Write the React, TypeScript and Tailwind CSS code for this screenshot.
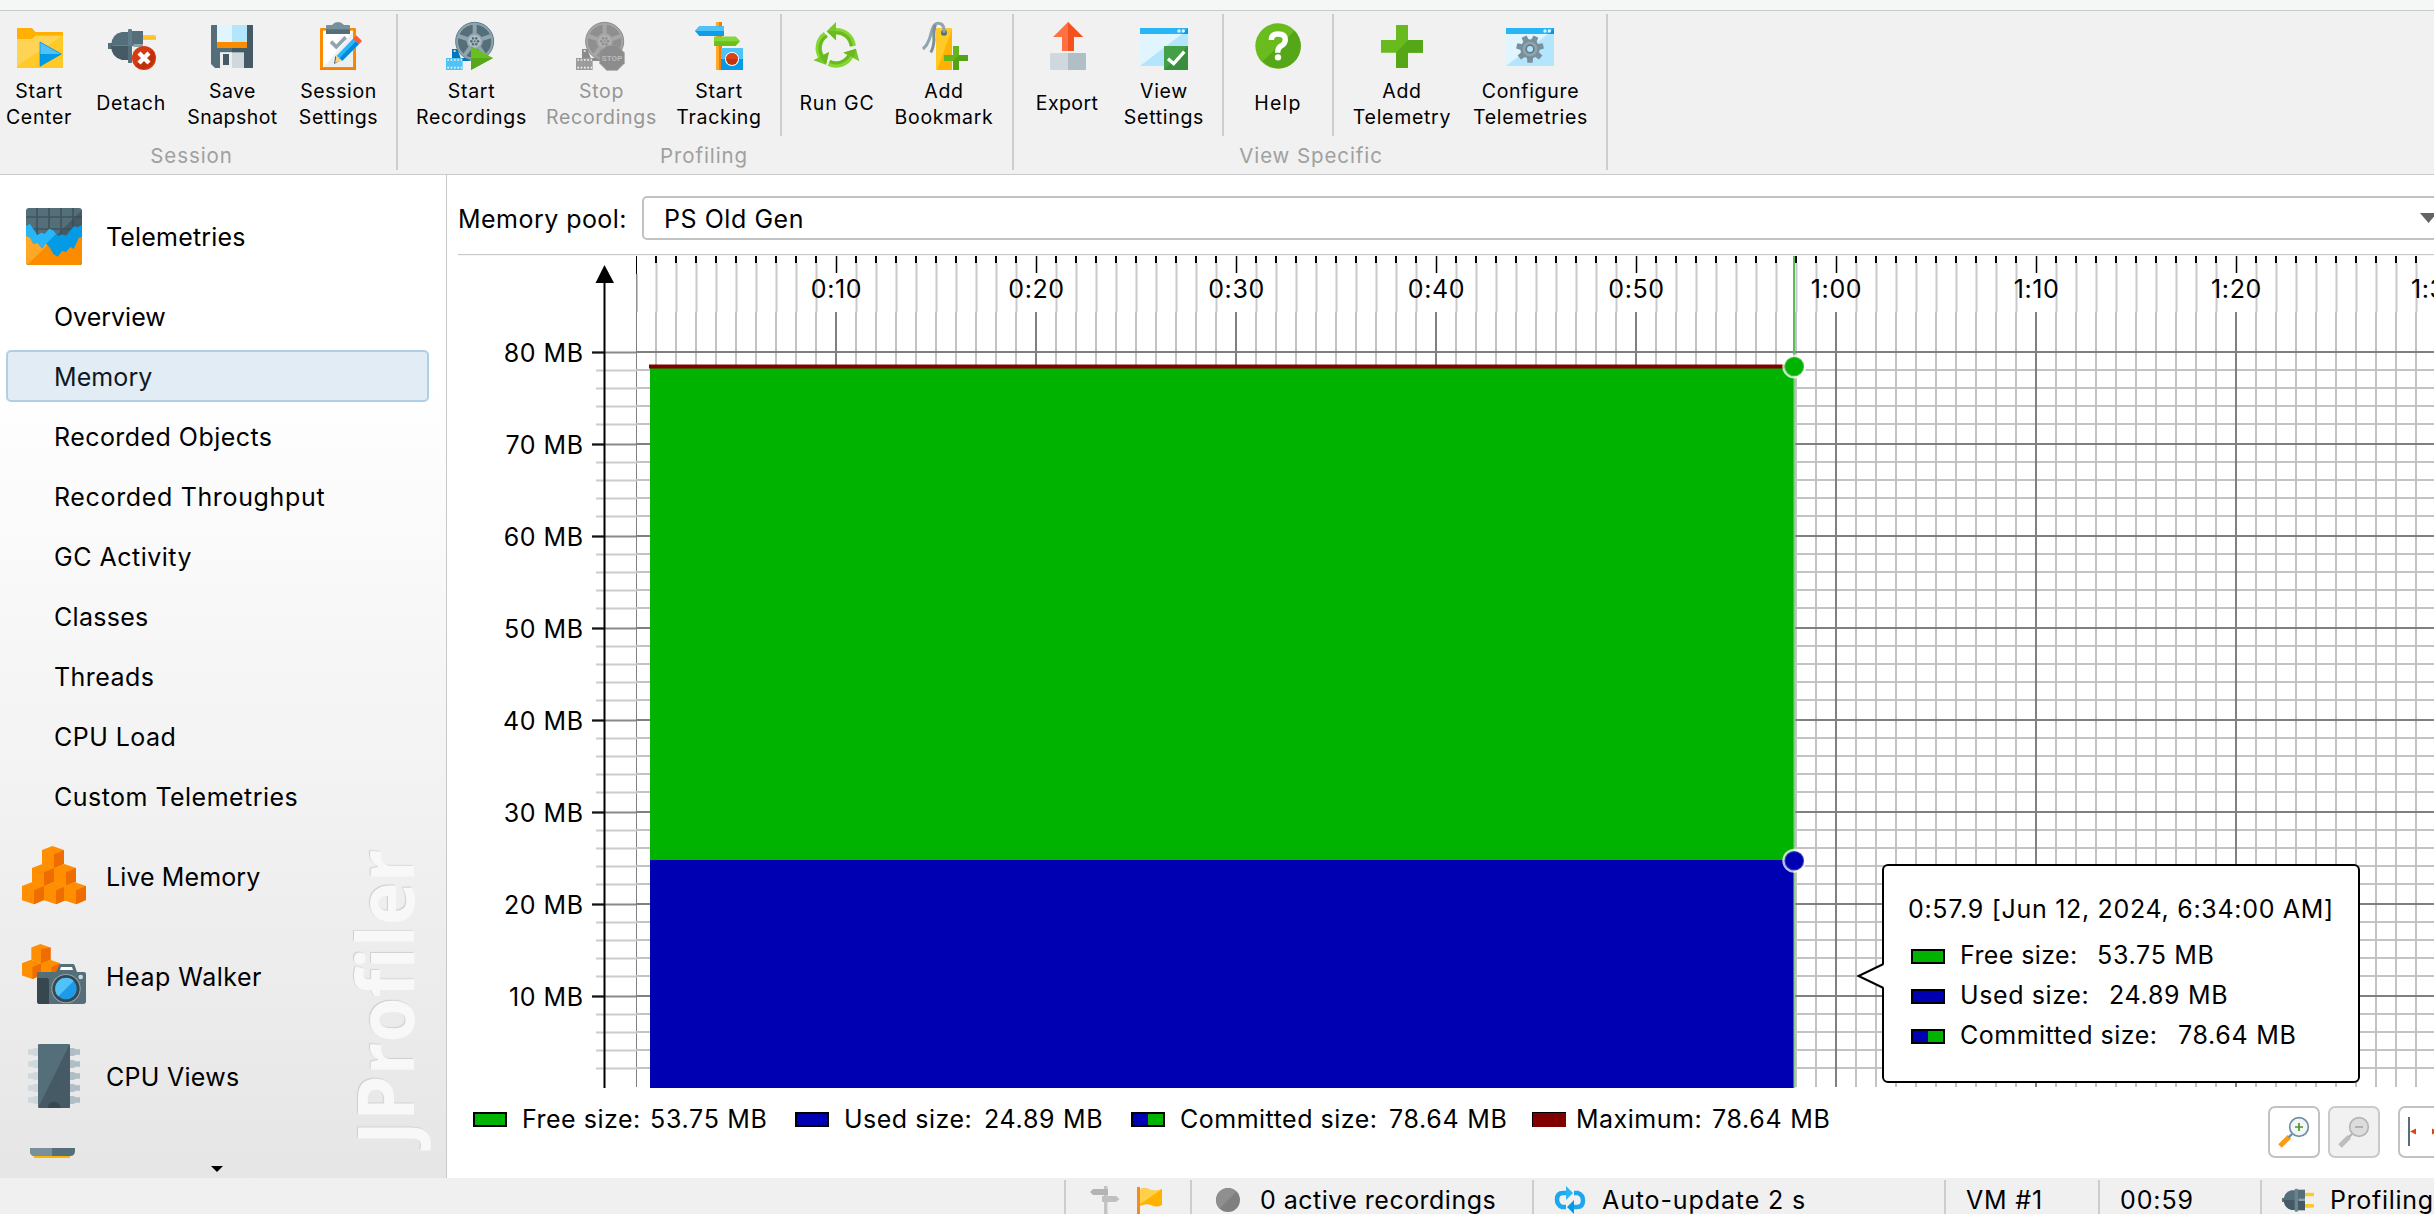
import React from 'react';

type IconProps = { vb: string; className?: string; children: React.ReactNode };
const Svg = ({ vb, className = 'size-12', children }: IconProps) => (
  <svg viewBox={vb} className={className + ' block shrink-0 overflow-visible'}>{children}</svg>
);

/* ---------- toolbar icons ---------- */
const StartCenterIcon = () => (
  <Svg vb="48 66 144 144">
    <path d="M51 84H96L106 96H189V204H51Z" fill="#ffb000" />
    <path d="M51 117H96L106 107H189V204H51Z" fill="#ffca28" />
    <path d="M51 117H96L106 107H186L51 198Z" fill="#ffd454" />
    <path d="M120 126L184 162L120 199Z" fill="#039be5" />
    <path d="M120 126L184 162H120Z" fill="#4fc3f7" />
    <path d="M120 126L184 162L120 199Z" fill="none" stroke="#0288d1" strokeWidth="2" />
  </Svg>
);
const DetachIcon = () => (
  <Svg vb="324 66 144 144">
    <rect x="324" y="129" width="14" height="18" fill="#546e7a" />
    <rect x="424" y="105" width="44" height="14" rx="5" fill="#ffca28" />
    <rect x="424" y="112" width="44" height="7" fill="#fbc02d" />
    <path d="M384 96H366Q334 102 333 137H384Z" fill="#546e7a" />
    <path d="M384 180H366Q334 172 333 137H384Z" fill="#455a64" />
    <rect x="396" y="93" width="33" height="45" fill="#546e7a" />
    <rect x="400" y="132" width="29" height="9" fill="#90a4ae" />
    <rect x="384" y="87" width="12" height="102" rx="4" fill="#607d8b" />
    <rect x="384" y="138" width="12" height="51" rx="4" fill="#546e7a" />
    <circle cx="432" cy="174" r="36" fill="#d33b13" />
    <path d="M406 199A36 36 0 0 0 457 149Z" fill="#bf300b" />
    <path d="M417 159L447 189M447 159L417 189" stroke="#fff" strokeWidth="13" />
  </Svg>
);
const SaveIcon = () => (
  <Svg vb="624 66 144 144">
    <path d="M636 75H756Q759 75 759 78V201Q759 204 756 204H645L633 192V78Q633 75 636 75Z" fill="#546e7a" />
    <path d="M696 75H756Q759 75 759 78V201Q759 204 756 204H696Z" fill="#455a64" />
    <rect x="651" y="75" width="90" height="51" fill="#b3e5fc" />
    <rect x="651" y="75" width="45" height="51" fill="#e1f5fe" />
    <rect x="651" y="126" width="90" height="18" fill="#fb8c00" />
    <rect x="660" y="157" width="72" height="47" fill="#cfd8dc" />
    <rect x="660" y="157" width="36" height="47" fill="#eceff1" />
    <rect x="669" y="162" width="18" height="33" fill="#455a64" />
  </Svg>
);
const SessionSettingsIcon = () => (
  <Svg vb="942 66 144 144">
    <rect x="960" y="84" width="108" height="126" rx="3" fill="#fb8c00" />
    <path d="M1068 150V210H960V205H1063Z" fill="#f57c00" />
    <rect x="969" y="92" width="90" height="109" fill="#fff" />
    <path d="M1059 96V201H972Z" fill="#eceff1" />
    <path d="M978 78Q978 75 981 75H996Q1003 66 1014 66Q1025 66 1032 75H1047Q1050 75 1050 78V102H978Z" fill="#78909c" />
    <rect x="978" y="88" width="72" height="14" fill="#546e7a" />
    <path d="M993 125L1009 141L1037 112" stroke="#90a4ae" strokeWidth="11" fill="none" />
    <path d="M1002 192L1006 168L1020 182Z" fill="#455a64" />
    <path d="M1005 188L1010 166L1028 181Z" fill="#ffcc80" />
    <path d="M1010 167L1059 116L1077 132L1027 182Z" fill="#29b6f6" />
    <path d="M1019 174L1068 124L1077 132L1027 182Z" fill="#0288e0" />
    <path d="M1059 116L1069 106L1086 123L1077 133Z" fill="#ff5a36" />
  </Svg>
);
const Film = ({ c1, c2 }: { c1: string; c2: string }) => (
  <>
    <path d="M156 147H172L182 174H211V183H156Z" fill={c2} />
    <rect x="138" y="174" width="50" height="36" fill={c1} />
    <path d="M142 180H186M142 203H186" stroke="#f1f1f1" strokeWidth="5" strokeDasharray="5 5" />
    <path d="M161 153h6" stroke="#f1f1f1" strokeWidth="5" />
  </>
);
const Reel = ({ rim, body, dark, lite }: { rim: string; body: string; dark: string; lite: string }) => (
  <>
    <circle cx="224" cy="124" r="57" fill={body} stroke={rim} strokeWidth="3" />
    <circle cx="224" cy="124" r="37" fill="none" stroke={dark} strokeWidth="26" />
    {[0, 72, 144, 216, 288].map(a => (
      <path key={a} d="M224 124V72" stroke={body} strokeWidth="12" transform={`rotate(${a} 224 124)`} />
    ))}
    <circle cx="224" cy="124" r="24" fill={body} />
    <circle cx="224" cy="124" r="19" fill={lite} />
    {[0, 60, 120, 180, 240, 300].map(a => (
      <circle key={a} cx="224" cy="114" r="4" fill={dark} transform={`rotate(${a + 30} 224 124)`} />
    ))}
    <circle cx="224" cy="124" r="3" fill={dark} />
  </>
);
const StartRecIcon = () => (
  <Svg vb="138 66 144 144">
    <Film c1="#4fc3f7" c2="#0277bd" />
    <Reel rim="#607d8b" body="#90a4ae" dark="#546e7a" lite="#b0bec5" />
    <path d="M213 138L279 174L213 210Z" fill="#6abf1e" />
    <path d="M213 174H279L213 210Z" fill="#56a818" />
  </Svg>
);
const StopRecIcon = () => (
  <Svg vb="138 66 144 144">
    <Film c1="#9c9c9c" c2="#8a8a8a" />
    <Reel rim="#8d8d8d" body="#a6a6a6" dark="#8f8f8f" lite="#b0b0b0" />
    <path d="M230 137H262L283 158V190L262 211H230L209 190V158Z" fill="#8c8c8c" stroke="#9f9f9f" strokeWidth="2" />
    <text x="246" y="183" textAnchor="middle" fontFamily="Roboto" fontWeight="700" fontSize="24" fill="#b9b9b9" textLength="62">STOP</text>
  </Svg>
);
const TrackingIcon = () => (
  <Svg vb="882 66 144 144">
    <rect x="945" y="66" width="18" height="144" fill="#ffa726" />
    <rect x="954" y="66" width="9" height="144" fill="#f57c00" />
    <path d="M882 93L895 79H969V108H895Z" fill="#0f9ce8" />
    <path d="M882 93L895 79H969V93Z" fill="#4fc3f7" />
    <path d="M1017 124L1004 110H939V138H1004Z" fill="#6abf1e" />
    <path d="M1017 124L1004 110H939V124Z" fill="#86d636" />
    <rect x="960" y="144" width="66" height="66" fill="#039be5" />
    <rect x="960" y="144" width="66" height="33" fill="#4fc3f7" />
    <circle cx="993" cy="177" r="21" fill="#fff" />
    <circle cx="993" cy="177" r="18" fill="#bf360c" />
    <path d="M975 177A18 18 0 0 1 1011 177Z" fill="#dd4414" />
  </Svg>
);
const RunGcIcon = () => (
  <Svg vb="96 66 144 144">
    <g fill="none" strokeWidth="19" stroke="#86d636">
      <path d="M165 94A49 49 0 0 1 218 138" />
      <path d="M137 104A49 49 0 0 0 125 172" />
      <path d="M147 189A49 49 0 0 0 211 168" />
    </g>
    <g fill="none" strokeWidth="9" stroke="#69b91f">
      <path d="M160 99A44 44 0 0 1 214 139" />
      <path d="M141 107A44 44 0 0 0 129 172" />
      <path d="M149 184A44 44 0 0 0 208 164" />
    </g>
    <path d="M140 94L168 66V121Z" fill="#76c928" />
    <path d="M140 94L168 94V121Z" fill="#69b91f" />
    <path d="M100 181L147 156L138 194Z" fill="#76c928" />
    <path d="M120 170L147 156L138 194Z" fill="#69b91f" />
    <path d="M190 158L228 146L238 184Z" fill="#76c928" />
    <path d="M190 158L228 146L222 172Z" fill="#69b91f" />
  </Svg>
);
const BookmarkIcon = () => (
  <Svg vb="420 66 144 144">
    <rect x="468" y="84" width="48" height="126" rx="3" fill="#ffca28" />
    <path d="M516 88V210H471Z" fill="#ffb300" />
    <circle cx="492" cy="98" r="9" fill="#546e7a" />
    <path d="M492 98V88Q490 70 474 70Q462 70 456 90L448 118Q442 136 429 147" fill="none" stroke="#90a4ae" strokeWidth="9" />
    <path d="M466 74Q460 92 462 120Q460 146 452 157" fill="none" stroke="#78909c" strokeWidth="9" />
    <path d="M519 138H537V165H564V183H537V210H519V183H492V165H519Z" fill="#64b51d" />
    <path d="M537 165H564V183H537V210H519V183Z" fill="#53a316" />
  </Svg>
);
const ExportIcon = () => (
  <Svg vb="792 66 144 144">
    <path d="M864 66L909 111H882V153H846V111H819Z" fill="#ff7043" />
    <path d="M864 66L909 111H882V153H864Z" fill="#f4511e" />
    <rect x="810" y="159" width="108" height="51" rx="3" fill="#cfd8dc" />
    <path d="M864 159H915Q918 159 918 162V207Q918 210 915 210H864Z" fill="#b0bec5" />
  </Svg>
);
const Win = () => (
  <>
    <rect x="1080" y="84" width="144" height="114" fill="#b3e5fc" />
    <path d="M1080 102H1206L1080 198Z" fill="#e1f5fe" />
    <rect x="1080" y="84" width="144" height="18" fill="#29b6f6" />
    <path d="M1206 102L1224 84V102Z" fill="#039be5" />
    <circle cx="1197" cy="93" r="5" fill="#e1f5fe" />
    <circle cx="1210" cy="93" r="5" fill="#e1f5fe" />
  </>
);
const ViewSettingsIcon = () => (
  <Svg vb="1080 66 144 144">
    <Win />
    <rect x="1152" y="138" width="72" height="72" fill="#388e3c" />
    <path d="M1152 138H1224L1152 210Z" fill="#43a047" />
    <path d="M1164 176L1181 191L1213 155" fill="none" stroke="#fff" strokeWidth="10" />
  </Svg>
);
const HelpIcon = () => (
  <Svg vb="162 66 144 144">
    <circle cx="234" cy="138" r="68" fill="#6abb1d" />
    <path d="M188 184A66 66 0 0 0 284 92Z" fill="#56a717" />
    <path d="M214 120Q214 102 234 102Q256 102 256 119Q256 131 243 138Q233 143 233 158" fill="none" stroke="#fff" strokeWidth="16" />
    <circle cx="234" cy="172" r="9.500" fill="#fff" />
  </Svg>
);
const AddIcon = () => (
  <Svg vb="534 66 144 144">
    <path d="M588 75H624V120H669V158H624V204H588V158H543V120H588Z" fill="#69ba1d" />
    <path d="M624 120H669V158H624V204H588V158Z" fill="#56a717" />
  </Svg>
);
const ConfigureIcon = () => (
  <Svg vb="1080 66 144 144">
    <Win />
    <g transform="translate(162 0)">
      {[0, 1, 2, 3, 4, 5, 6].map(k => (
        <path key={k} d="M980 160L982 188H998L1000 160Z" transform={`rotate(${(k * 360) / 7} 990 147)`} fill="#78909c" />
      ))}
      <circle cx="990" cy="147" r="29" fill="#78909c" />
      <circle cx="990" cy="147" r="22" fill="#90a4ae" />
      <circle cx="990" cy="147" r="14" fill="#607d8b" />
      <circle cx="990" cy="147" r="9" fill="#b3e5fc" />
    </g>
  </Svg>
);

/* ---------- toolbar ---------- */
type ToolProps = { w: string; lines: string[]; ls?: string; pad?: string; disabled?: boolean; children: React.ReactNode };
const Tool = ({ w, lines, ls = 'tracking-[0.7px]', pad = '', disabled, children }: ToolProps) => (
  <div className={w + ' flex shrink-0 flex-col items-center'}>
    {children}
    <div className={ls + ' ' + pad + ' flex h-[52px] flex-col items-center justify-center text-[19.5px] leading-[26px] whitespace-nowrap ' + (lines.length > 1 ? 'mt-2 ' : 'mt-[7px] ') + (disabled ? 'text-[#969696]' : 'text-black')}>
      {lines.map(l => <div key={l}>{l}</div>)}
    </div>
  </div>
);
const Sep = () => <div className="-mt-2 h-[122px] w-[2px] shrink-0 bg-[#cdcdcd]" />;
const Group = ({ w, label, pad = '', children }: { w: string; label: string; pad?: string; children: React.ReactNode }) => (
  <div className={w + ' flex shrink-0 flex-col'}>
    <div className="flex h-[133px] pt-[11px]">{children}</div>
    <div className={pad + ' text-center text-[20.5px] leading-6 tracking-[0.9px] text-[#a0a0a0]'}>{label}</div>
  </div>
);
const GroupSep = () => <div className="mt-[3px] h-[156px] w-[2px] shrink-0 bg-[#cdcdcd]" />;

const Toolbar = () => (
  <div className="flex h-[164px] shrink-0 border-b border-[#cacaca] bg-[#f1f1f1]">
    <Group w="w-[396px]" label="Session" pad="pr-[13px]">
      <Tool w="w-20" lines={['Start', 'Center']} pad="pr-[2px]"><StartCenterIcon /></Tool>
      <Tool w="w-[104px]" lines={['Detach']} pad="pr-[2px]"><DetachIcon /></Tool>
      <Tool w="w-24" lines={['Save', 'Snapshot']} ls="tracking-[0.45px]" pad="pl-[1px]"><SaveIcon /></Tool>
      <Tool w="w-[116px]" lines={['Session', 'Settings']} ls="tracking-[0.6px]" pad="pl-[1px]"><SessionSettingsIcon /></Tool>
    </Group>
    <GroupSep />
    <Group w="w-[614px]" label="Profiling" pad="pr-[2px]">
      <Tool w="w-36" lines={['Start', 'Recordings']} pad="pl-[3px]"><StartRecIcon /></Tool>
      <Tool w="w-[116px]" lines={['Stop', 'Recordings']} disabled pad="pl-[3px]"><StopRecIcon /></Tool>
      <Tool w="w-[122px]" lines={['Start', 'Tracking']}><TrackingIcon /></Tool>
      <Sep />
      <Tool w="w-[108px]" lines={['Run GC']} ls="tracking-[0.87px]" pad="pl-[2px]"><RunGcIcon /></Tool>
      <Tool w="w-[108px]" lines={['Add', 'Bookmark']}><BookmarkIcon /></Tool>
    </Group>
    <GroupSep />
    <Group w="w-[592px]" label="View Specific" pad="pl-[2px]">
      <Tool w="w-[108px]" lines={['Export']} ls="tracking-[0.4px]" pad="pr-[2px]"><ExportIcon /></Tool>
      <Tool w="w-[84px]" lines={['View', 'Settings']}><ViewSettingsIcon /></Tool>
      <div className="w-4" />
      <Sep />
      <Tool w="w-[108px]" lines={['Help']} ls="tracking-[1.3px]"><HelpIcon /></Tool>
      <Sep />
      <Tool w="w-[136px]" lines={['Add', 'Telemetry']}><AddIcon /></Tool>
      <Tool w="w-[120px]" lines={['Configure', 'Telemetries']} pad="pl-[1px]"><ConfigureIcon /></Tool>
    </Group>
    <GroupSep />
  </div>
);

/* ---------- sidebar icons ---------- */
const TelemetriesIcon = () => (
  <Svg vb="66 72 192 192" className="size-16">
    <clipPath id="tel"><rect x="78" y="84" width="168" height="171" rx="9" /></clipPath>
    <g clipPath="url(#tel)">
      <rect x="78" y="84" width="168" height="171" fill="#546e7a" />
      <path d="M246 90V255H80Z" fill="#455a64" />
      <path d="M111 84V200M147 84V200M183 84V200M219 84V200M78 111H246M78 147H246" stroke="#37474f" strokeOpacity="0.65" strokeWidth="5" />
      <path d="M78 138L90 132L112 166L124 158L134 162L148 146L160 152L174 168L186 163L198 167L222 138L232 142L246 135V255H78Z" fill="#039be5" />
      <path d="M78 138L90 132L112 166L124 158L134 162L148 146L160 152L168 162L100 230H78Z" fill="#29b6f6" />
      <path d="M78 168L90 174L100 193L112 190L126 206L138 191L150 204L160 222L173 230L186 213L198 216L211 201L221 207L236 174L246 171V255H78Z" fill="#fb8c00" />
      <path d="M78 168L90 174L100 193L112 190L126 206L138 191L142 196L82 254H78Z" fill="#ffa726" />
    </g>
  </Svg>
);
const Cube = ({ x, y, s = 1 }: { x: number; y: number; s?: number }) => (
  <g transform={`translate(${x} ${y}) scale(${s})`}>
    <path d="M0 12L31 0L66 12V54L36 67L0 55Z" fill="#ff8f00" />
    <path d="M36 25L66 12V54L36 67Z" fill="#ef6c00" />
  </g>
);
const LiveMemoryIcon = () => (
  <Svg vb="66 192 192 192" className="size-16">
    <Cube x={126} y={198} />
    <Cube x={96} y={252} /><Cube x={162} y={252} />
    <Cube x={66} y={306} /><Cube x={132} y={306} /><Cube x={192} y={306} />
  </Svg>
);
const HeapWalkerIcon = () => (
  <Svg vb="66 492 192 192" className="size-16">
    <Cube x={94} y={492} s={0.87} />
    <Cube x={66} y={539} s={0.87} /><Cube x={123} y={539} s={0.87} />
    <path d="M123 507L151 503V538L123 550Z" fill="#ef6c00" />
    <path d="M111 582Q111 576 117 576H168L178 556Q180 552 184 552H218Q222 552 224 556L231 576H252Q258 576 258 582V664Q258 672 250 672H119Q111 672 111 664Z" fill="#546e7a" />
    <path d="M111 594H140Q147 594 147 602V672H119Q111 672 111 664Z" fill="#37474f" />
    <path d="M183 561H216L219 570H180Z" fill="#fff" />
    <circle cx="198" cy="626" r="44" fill="#90a4ae" />
    <circle cx="198" cy="626" r="41" fill="#37474f" />
    <circle cx="198" cy="626" r="32" fill="#1e9be8" />
    <path d="M175 649A32 32 0 0 1 221 603Z" fill="#4fc3f7" />
    <circle cx="242" cy="591" r="7" fill="#cfd8dc" />
  </Svg>
);
const CpuIcon = () => (
  <Svg vb="66 792 192 192" className="size-16">
    {[816, 852, 888, 924, 960].map(y => (
      <g key={y}>
        <path d={`M84 ${y - 8}H96L104 ${y - 12}H114V${y + 12}H104L96 ${y + 8}H84Z`} fill="#cfd8dc" />
        <path d={`M240 ${y - 8}H228L220 ${y - 12}H210V${y + 12}H220L228 ${y + 8}H240Z`} fill="#b0bec5" />
      </g>
    ))}
    <rect x="114" y="792" width="96" height="192" rx="4" fill="#546e7a" />
    <path d="M208 795L210 797V980Q210 984 206 984H118L116 980Z" fill="#455a64" />
    <path d="M143 984A19 19 0 0 1 181 984Z" fill="#37474f" />
  </Svg>
);

const Category = ({ label, ls, children }: { label: string; ls: string; children: React.ReactNode }) => (
  <div className="flex h-[100px] items-center pl-[22px]">
    {children}
    <span className={ls + ' ml-5 pt-[3px] text-[25px]'}>{label}</span>
  </div>
);
const ITEMS: [string, string][] = [
  ['Overview', 'tracking-[0px]'],
  ['Memory', 'tracking-[0.1px]'],
  ['Recorded Objects', 'tracking-[0.45px]'],
  ['Recorded Throughput', 'tracking-[0.65px]'],
  ['GC Activity', 'tracking-[0.5px]'],
  ['Classes', 'tracking-[0.3px]'],
  ['Threads', 'tracking-[0.45px]'],
  ['CPU Load', 'tracking-[0.45px]'],
  ['Custom Telemetries', 'tracking-[0.47px]'],
];
const Sidebar = () => (
  <div className="relative flex w-[447px] shrink-0 flex-col overflow-hidden border-r border-[#c8c8c8] bg-linear-to-b from-white from-20% to-[#e6e6e6] pt-[11px]">
    <div className="absolute top-[668px] left-[342px] h-[300px] w-[84px]">
      <div className="absolute bottom-[-2px] left-0 origin-bottom-left translate-x-[84px] -rotate-90">
        <div className="origin-left scale-x-[0.93] font-['Open_Sans'] text-[78px] leading-[84px] font-bold text-[#f8f8f8] [font-variant-ligatures:none] [text-shadow:1px_-1px_1px_#cfcfcf]">JProfiler</div>
      </div>
    </div>
    <Category label="Telemetries" ls="tracking-[0.18px]"><TelemetriesIcon /></Category>
    {ITEMS.map(([t, ls], i) => (
      <div key={t} className="flex h-[60px] items-center px-[6px]">
        <div className={ls + ' flex h-[52px] w-[423px] items-center rounded-[5px] border-2 pt-[3px] pl-[46px] text-[25px] ' + (i === 1 ? 'border-[#afcfe7] bg-[#e2ecf5] text-[#0e1822]' : 'border-transparent text-black')}>{t}</div>
      </div>
    ))}
    <Category label="Live Memory" ls="tracking-[0.1px]"><LiveMemoryIcon /></Category>
    <Category label="Heap Walker" ls="tracking-[0.5px]"><HeapWalkerIcon /></Category>
    <Category label="CPU Views" ls="tracking-[0.28px]"><CpuIcon /></Category>
    <svg viewBox="90 1104 135 30" className="mt-[22px] ml-[30px] block h-[10px] w-[45px] shrink-0">
      <path d="M90 1104H225V1112Q225 1128 210 1128H105Q90 1128 90 1112Z" fill="#546e7a" />
      <path d="M90 1104H156V1128H105Q90 1128 90 1112Z" fill="#78909c" />
      <rect x="102" y="1128" width="108" height="6" fill="#ffb300" />
    </svg>
    <svg viewBox="0 0 12 6" className="mt-2 ml-[211px] block h-[6px] w-3 shrink-0"><path d="M0 0H12L6 6Z" /></svg>
  </div>
);

/* ---------- chart ---------- */
const SECONDS = Array.from({ length: 90 }, (_, i) => i);
const ROWS: { y: number; major: boolean }[] = [];
for (let k = 0; k < 8; k++) {
  const y = 352 + k * 92;
  ROWS.push({ y, major: true });
  for (let m = 1; m <= 4; m++) ROWS.push({ y: y + m * 18, major: false });
}
const fmt = (s: number) => `${Math.floor(s / 60)}:${String(s % 60).padStart(2, '0')}`;

const Chart = () => (
  <svg viewBox="447 256 1987 832" width="1987" height="832" className="block shrink-0 font-['Inter'] text-[25px]">
    {/* time axis */}
    {SECONDS.map(i => {
      const x = 636 + i * 20;
      const major = i % 10 === 0;
      if (i === 0) return (
        <g key={i}>
          <rect x="636" y="256" width="1" height="18" fill="#000" />
          <rect x="636" y="274" width="1.500" height="38" fill="#8f8f8f" />
          <rect x="636" y="312" width="1" height="775" fill="#808080" />
        </g>
      );
      return (
        <g key={i}>
          {major
            ? <rect x={x - 0.25} y="256" width="1.500" height="17" fill="#000" />
            : <rect x={x - 1} y="256" width="2" height="7" fill="#000" />}
          {!major && <rect x={x - 0.5} y="263" width="2" height="49" fill="#c9c9c9" />}
          {!major && <rect x={x - 1} y="312" width="2" height="775" fill="#c3c3c3" />}
        </g>
      );
    })}
    {/* memory axis */}
    {ROWS.map(({ y, major }) => (
      <g key={y}>
        <rect x={major ? 592 : 596} y={y - 0.5} width={major ? 45 : 41} height="2" fill={major ? '#8a8a8a' : '#cccccc'} />
        {major && <rect x="592" y={y - 0.5} width="12" height="2" fill="#111" />}
        <rect x="636" y={y - 1} width="1798" height="2" fill={major ? '#808080' : '#c3c3c3'} />
      </g>
    ))}
    {SECONDS.filter(i => i && i % 10 === 0).map(i => (
      <rect key={i} x={635 + i * 20} y="312" width="2" height="775" fill="#808080" />
    ))}
    <rect x="603.500" y="275" width="2" height="813" fill="#000" />
    <path d="M604.500 265L614 283H595.500Z" />
    {[80, 70, 60, 50, 40, 30, 20, 10].map((v, k) => (
      <text key={v} x="583.500" y={361.500 + k * 92} textAnchor="end" letterSpacing="0.5">{v} MB</text>
    ))}
    {[10, 20, 30, 40, 50, 60, 70, 80, 90].map(s => (
      <text key={s} x={636.500 + s * 20} y="298" textAnchor="middle" letterSpacing="0.6">{fmt(s)}</text>
    ))}
    {/* stacked areas */}
    <rect x="650" y="368" width="1144" height="492" fill="#00b300" />
    <rect x="650" y="860" width="1144" height="228" fill="#0000b3" />
    <rect x="649" y="364.500" width="1145" height="4" fill="#800000" />
    {/* cursor */}
    <rect x="1793" y="256" width="2" height="104" fill="#5cbd5c" />
    <rect x="1793.500" y="368" width="1.800" height="720" fill="#8ccb8c" />
    <circle cx="1794.300" cy="366.500" r="12" fill="#fff" fillOpacity="0.75" />
    <circle cx="1794.300" cy="366.500" r="9.800" fill="#00b300" fillOpacity="0.75" />
    <circle cx="1794.300" cy="366.500" r="8.800" fill="#00b300" />
    <circle cx="1794.300" cy="860.800" r="12" fill="#fff" fillOpacity="0.75" />
    <circle cx="1794.300" cy="860.800" r="9.800" fill="#0000b3" fillOpacity="0.75" />
    <circle cx="1794.300" cy="860.800" r="8.800" fill="#0000b3" />
  </svg>
);

const Swatch = ({ color, border = 'border-2' }: { color: string; border?: string }) => (
  <span className={color + ' ' + border + ' block h-[15px] w-[34px] shrink-0 border-black'} />
);
const GREEN = 'bg-[#00b300]';
const BLUE = 'bg-[#0000b3]';
const SPLIT = 'bg-[linear-gradient(90deg,#0000b3_50%,#00b300_50%)]';

const Tooltip = () => (
  <div className="absolute top-[608px] left-[1435px] h-[219px] w-[478px] rounded-md border-2 border-black bg-white pt-[25px] pl-[24px] text-[25px] whitespace-nowrap">
    <svg viewBox="0 0 28 28" className="absolute top-[96px] left-[-27px] block h-7 w-7 overflow-visible">
      <path d="M28 2V26H26L1 14L26 2Z" fill="#fff" />
      <path d="M26.500 2L1.500 14L26.500 26" fill="none" stroke="#000" strokeWidth="2" />
    </svg>
    <div className="h-[45px] leading-9 tracking-[0.7px]">0:57.9 [Jun 12, 2024, 6:34:00 AM]</div>
    <div className="flex h-10 items-center gap-[15px] pl-[3px]"><Swatch color={GREEN} /><span className="w-[122px] tracking-[0.4px]">Free size:</span><span className="tracking-[0.7px]">53.75 MB</span></div>
    <div className="flex h-10 items-center gap-[15px] pl-[3px]"><Swatch color={BLUE} /><span className="w-[134px] tracking-[0.6px]">Used size:</span><span className="tracking-[0.7px]">24.89 MB</span></div>
    <div className="flex h-10 items-center gap-[15px] pl-[3px]"><Swatch color={SPLIT} /><span className="w-[203px] tracking-[0.5px]">Committed size:</span><span className="tracking-[0.7px]">78.64 MB</span></div>
  </div>
);

const LegendItem = ({ w, color, border, label, lw, value, gap = 'ml-[15px]' }: { w: string; color: string; border?: string; label: string; lw: string; value: string; gap?: string }) => (
  <div className={w + ' flex shrink-0 items-center whitespace-nowrap'}>
    <Swatch color={color} border={border} />
    <span className={lw + ' ' + gap + ' shrink-0 tracking-[0.5px]'}>{label}</span>
    <span className="tracking-[0.7px]">{value}</span>
  </div>
);

const Glass = ({ ring, lens, handle, sign, minus }: { ring: string; lens: string; handle: string; sign: string; minus?: boolean }) => (
  <svg viewBox="0 0 96 96" className="block size-8">
    <path d="M6 90L34 62" stroke={handle} strokeWidth="15" />
    <path d="M32 64L42 54" stroke={ring} strokeWidth="7" />
    <circle cx="63" cy="33" r="28" fill={lens} stroke={ring} strokeWidth="5" />
    <path d={minus ? 'M51 33H75' : 'M51 33H75M63 21V45'} stroke={sign} strokeWidth="5" />
  </svg>
);

const Legend = () => (
  <div className="flex h-[90px] shrink-0 overflow-hidden pl-[26px] text-[25px]">
    <div className="flex h-[63px] items-center">
      <LegendItem w="w-[322px]" color={GREEN} label="Free size:" lw="w-[128px]" value="53.75 MB" />
      <LegendItem w="w-[336px]" color={BLUE} label="Used size:" lw="w-[140px]" value="24.89 MB" />
      <LegendItem w="w-[401px]" color={SPLIT} label="Committed size:" lw="w-[209px]" value="78.64 MB" />
      <LegendItem w="w-[300px]" color="bg-[#800000]" border="border-t border-l" label="Maximum:" lw="w-[136px]" value="78.64 MB" gap="ml-[10px]" />
    </div>
    <div className="flex items-start pt-[18px] pl-[436px]">
      <div className="flex size-[52px] shrink-0 items-center justify-center rounded-[7px] border-2 border-[#c2c2c2] bg-white">
        <Glass ring="#6f8ea0" lens="#f2f6f8" handle="#fb9a14" sign="#4f961c" />
      </div>
      <div className="ml-2 flex size-[52px] shrink-0 items-center justify-center rounded-[7px] border-2 border-[#cacaca] bg-[#f1f1f1]">
        <Glass ring="#b4b4b4" lens="#dcdcdc" handle="#bdbdbd" sign="#a8a8a8" minus />
      </div>
      <div className="ml-[18px] flex size-[52px] shrink-0 items-center rounded-[7px] border-2 border-[#c2c2c2] bg-white">
        <svg viewBox="0 0 32 30" className="ml-2 block h-[30px] w-8 shrink-0">
          <path d="M1 0V29M31 0V29" stroke="#546e7a" strokeWidth="2" />
          <path d="M2 14.500L8 11.500V17.500ZM30 14.500L24 11.500V17.500Z" fill="#dd4414" />
        </svg>
      </div>
    </div>
  </div>
);

const Main = () => (
  <div className="relative flex min-w-0 flex-1 flex-col bg-white">
    <div className="flex h-[79px] shrink-0 items-start pt-[21px] pl-[11px]">
      <div className="w-[184px] shrink-0 text-[25px] leading-[46px] tracking-[0.46px]">Memory pool:</div>
      <div className="flex h-[44px] w-[1836px] shrink-0 items-center rounded-[5px] border-2 border-[#c2c2c2] bg-white pl-[20px]">
        <span className="pt-[2px] text-[25px] leading-[40px] tracking-[0.55px]">PS Old Gen</span>
        <svg viewBox="0 0 17 10" className="mr-[39px] ml-auto block h-[10px] w-[17px] shrink-0"><path d="M0 0H17L8.500 10Z" fill="#646464" /></svg>
      </div>
    </div>
    <div className="ml-[11px] h-[2px] shrink-0 border-t border-[#c8c8c8] bg-[#f6f6f6]" />
    <div className="relative overflow-hidden">
      <Chart />
      <Tooltip />
    </div>
    <Legend />
  </div>
);

/* ---------- status bar ---------- */
const StatusSep = () => <div className="mt-[2px] h-9 w-[2px] shrink-0 bg-[#cdcdcd]" />;
const StatusBar = () => (
  <div className="flex h-9 shrink-0 overflow-hidden bg-[#f0f0f0] pl-[1064px] text-[25px] leading-[44px] whitespace-nowrap">
    <StatusSep />
    <div className="flex w-[124px] shrink-0 pl-6">
      <svg viewBox="0 0 30 32" className="mt-2 block h-8 w-[30px]">
        <rect x="14" y="0" width="3.500" height="32" fill="#c4c4c4" />
        <path d="M0 6L3 3H18V9H3Z" fill="#b4b4b4" />
        <path d="M29.500 13L26 10H12V16H26Z" fill="#c0c0c0" />
      </svg>
      <svg viewBox="0 0 26 32" className="mt-2 ml-[17px] block h-8 w-[26px]">
        <rect x="0" y="1" width="3" height="31" fill="#f58a1f" />
        <path d="M3 3Q9 1 14 4Q19 6 25 3V19Q19 22 14 19Q9 17 3 20Z" fill="#ffb300" />
        <path d="M3 3Q9 1 14 4Q19 6 25 3L4 17.500L3 18Z" fill="#ffd04a" />
      </svg>
    </div>
    <StatusSep />
    <div className="flex w-[340px] shrink-0 pl-6">
      <svg viewBox="0 0 24 24" className="mt-[10px] block size-6">
        <circle cx="12" cy="12" r="12" fill="#7f7f7f" />
        <path d="M3.500 20.500A12 12 0 0 1 20.500 3.500Z" fill="#8f8f8f" />
      </svg>
      <span className="ml-[20px] tracking-[0.48px]">0 active recordings</span>
    </div>
    <StatusSep />
    <div className="flex w-[410px] shrink-0 pl-5">
      <svg viewBox="0 0 32 28" className="mt-2 block h-7 w-8">
        <g fill="none" stroke="#1ea7ee" strokeWidth="4.500">
          <path d="M12 21H8Q3 19 3 13.500Q3 7 9 7H13" />
          <path d="M20 7H24Q29 9 29 14.500Q29 21 23 21H19" />
        </g>
        <path d="M12 0L19 7L12 14Z" fill="#29b6f6" />
        <path d="M20 14L13 21L20 28Z" fill="#039be5" />
      </svg>
      <span className="ml-[16px] tracking-[0.88px]">Auto-update 2 s</span>
    </div>
    <StatusSep />
    <div className="w-[152px] shrink-0 pl-[20px] tracking-[0.8px]">VM #1</div>
    <StatusSep />
    <div className="w-[160px] shrink-0 pl-[20px] tracking-[0.9px]">00:59</div>
    <StatusSep />
    <div className="flex pl-5">
      <svg viewBox="144 325 96 72" className="mt-[10px] block h-6 w-8 shrink-0">
        <rect x="144" y="355" width="8" height="12" fill="#546e7a" />
        <rect x="212" y="339" width="28" height="11" rx="2" fill="#ffca28" />
        <rect x="212" y="373" width="28" height="11" rx="2" fill="#ffca28" />
        <path d="M183 332H172Q150 338 149 361H183Z" fill="#546e7a" />
        <path d="M183 391H172Q150 385 149 361H183Z" fill="#455a64" />
        <rect x="190" y="330" width="23" height="31" fill="#546e7a" />
        <rect x="190" y="361" width="23" height="31" fill="#455a64" />
        <rect x="182" y="327" width="10" height="69" rx="3" fill="#6a8390" />
        <rect x="194" y="357" width="19" height="7" fill="#90a4ae" />
      </svg>
      <span className="ml-[16px] tracking-[0.7px]">Profiling</span>
    </div>
  </div>
);

export default function App() {
  return (
    <div className="flex h-[1214px] w-[2434px] flex-col overflow-hidden bg-[#f5f7f7] font-['Inter',sans-serif] text-black">
      <div className="h-[11px] shrink-0 border-b border-[#c9c9c9]" />
      <Toolbar />
      <div className="flex min-h-0 flex-1">
        <Sidebar />
        <Main />
      </div>
      <StatusBar />
    </div>
  );
}
